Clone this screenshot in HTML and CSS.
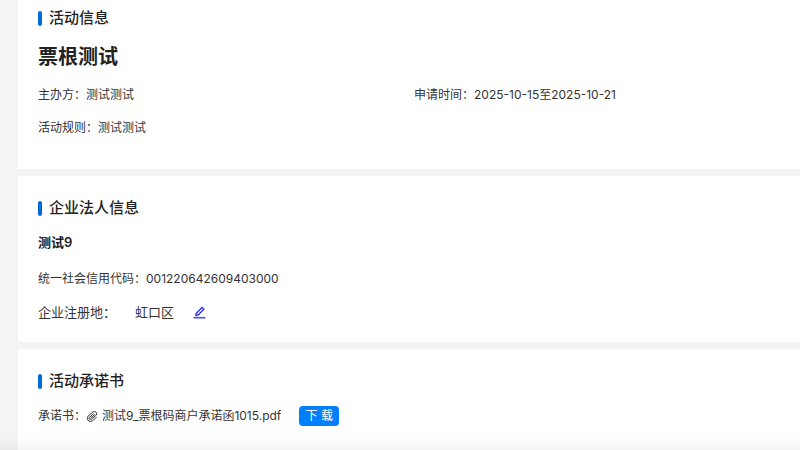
FILE: index.html
```html
<!DOCTYPE html>
<html lang="zh-CN">

<head>
    <meta charset="UTF-8">
    <meta name="viewport" content="width=device-width, initial-scale=1.0">
    <title>活动信息</title>
    <link rel="stylesheet" href="styles.css">
</head>

<body>
    <main class="page">
        <section class="card first">
            <h2 class="card-title">活动信息</h2>
            <h1 class="name">票根测试</h1>
            <dl class="info">
                <div class="item">
                    <dt>主办方：</dt>
                    <dd>测试测试</dd>
                </div>
                <div class="item">
                    <dt>申请时间：</dt>
                    <dd>2025-10-15至2025-10-21</dd>
                </div>
                <div class="item">
                    <dt>活动规则：</dt>
                    <dd>测试测试</dd>
                </div>
            </dl>
        </section>

        <section class="card">
            <h2 class="card-title">企业法人信息</h2>
            <h3 class="company">测试9</h3>
            <dl class="info single">
                <div class="item">
                    <dt>统一社会信用代码：</dt>
                    <dd>001220642609403000</dd>
                </div>
                <div class="item area">
                    <dt>企业注册地：</dt>
                    <dd>虹口区</dd>
                    <dd>
                        <a href="#" class="edit" aria-label="编辑">
                            <svg viewBox="64 64 896 896" fill="currentColor" stroke="currentColor" stroke-width="16">
                                <path d="M257.700 752c2 0 4-.2 6-.5L431.900 722c2-.4 3.900-1.300 5.300-2.800l423.900-423.900a9.960 9.960 0 0 0 0-14.100L694.900 114.900c-1.900-1.900-4.400-2.900-7.100-2.900s-5.200 1-7.100 2.900L256.800 538.800c-1.500 1.500-2.400 3.300-2.800 5.300l-29.500 168.200a33.500 33.500 0 0 0 9.400 29.800c6.600 6.400 14.900 9.900 23.800 9.900zm67.400-174.400L687.800 215l73.300 73.300-362.700 362.600-88.900 15.700 15.600-89zM880 836H144c-17.700 0-32 14.300-32 32v36c0 4.400 3.600 8 8 8h784c4.400 0 8-3.600 8-8v-36c0-17.700-14.300-32-32-32z" />
                            </svg>
                        </a>
                    </dd>
                </div>
            </dl>
        </section>

        <section class="card">
            <h2 class="card-title">活动承诺书</h2>
            <div class="file">
                <span>承诺书：</span>
                <svg class="clip" viewBox="0 0 24 24" fill="none" stroke="currentColor" stroke-width="2">
                    <g transform="rotate(-40 12 12)">
                        <path d="M18 9H6a3 3 0 0 0 0 6h13a5 5 0 0 0 0-10H6a7 7 0 0 0 0 14h12M6 12h13" />
                    </g>
                </svg>
                <span class="file-name">测试9_票根码商户承诺函1015.pdf</span>
                <button type="button" class="download">下 载</button>
            </div>
        </section>
    </main>
    <div class="bottom-shadow"></div>
</body>

</html>
```

FILE: styles.css
```css
* {
    margin: 0;
    padding: 0;
    box-sizing: border-box;
}

body {
    background: #f4f4f4;
    color: #333;
    font: 12px/20px Inter, 'Noto Sans CJK SC', sans-serif;
}

.page {
    display: flex;
    flex-direction: column;
    gap: 7px;
    min-height: 100vh;
    padding-left: 18px;
}

.card {
    padding: 21px 10px 20px 20px;
    background: #fff;
}

.card.first {
    padding-top: 7px;
    padding-bottom: 31px;
}

.card:last-child {
    flex: 1;
}

.card-title {
    display: flex;
    align-items: center;
    gap: 7px;
    margin-bottom: 14px;
    color: #222;
    font-size: 15px;
    font-weight: 500;
    line-height: 22px;
}

.card-title::before {
    content: '';
    width: 4px;
    height: 15px;
    border-radius: 2px;
    background: #006bd8;
}

.name {
    margin-bottom: 14px;
    color: #222;
    font-size: 20px;
    font-weight: 600;
    line-height: 28px;
}

.company {
    margin-bottom: 18px;
    color: #222;
    font-size: 13px;
    font-weight: 600;
    line-height: 18px;
}

.info {
    display: grid;
    grid-template-columns: 1fr 1fr;
    row-gap: 13px;
}

.info.single {
    grid-template-columns: 1fr;
}

.item {
    display: flex;
}

.area {
    align-items: center;
    gap: 19px;
    font-size: 13px;
}

.edit {
    display: block;
    color: #1a1aff;
}

.edit svg {
    display: block;
    width: 13px;
    height: 13px;
}

.file {
    display: flex;
    align-items: center;
}

.clip {
    width: 11px;
    height: 11px;
    margin: 0 4px 0 1px;
}

.download {
    width: 40px;
    height: 20px;
    margin-left: 18px;
    border: none;
    border-radius: 4px;
    background: #0080ff;
    color: #fff;
    font: inherit;
    cursor: pointer;
}

.bottom-shadow {
    position: fixed;
    right: 0;
    bottom: 0;
    left: 0;
    height: 14px;
    background: linear-gradient(rgba(0, 0, 0, 0), rgba(0, 0, 0, .04));
    pointer-events: none;
}
```
